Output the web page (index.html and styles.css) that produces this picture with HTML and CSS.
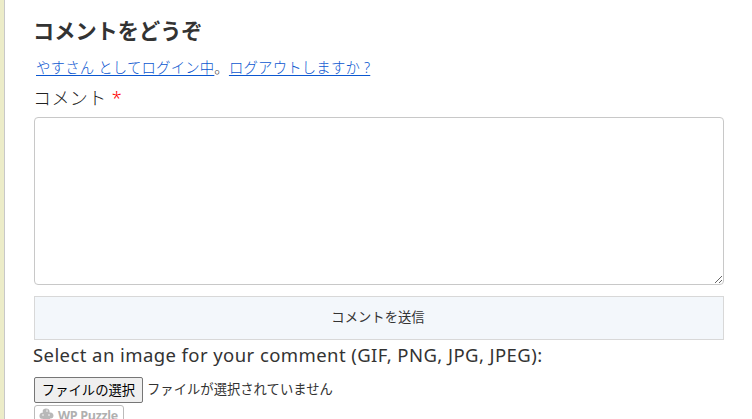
FILE: index.html
```
<!DOCTYPE html>
<html lang="ja">
<head>
    <meta charset="UTF-8">
    <meta name="viewport" content="width=device-width, initial-scale=1.0">
    <title>コメントをどうぞ</title>
    <link rel="stylesheet" href="styles.css">
</head>
<body>

    <div class="content">
        <h3 class="reply-title">コメントをどうぞ</h3>

        <form class="comment-form">
            <p class="logged-in-as"><a href="#">やすさん としてログイン中</a>。<a href="#">ログアウトしますか ?</a></p>

            <label class="comment-label" for="comment">コメント <span class="required">*</span></label>
            <textarea id="comment" class="comment-box"></textarea>

            <button type="button" class="submit">コメントを送信</button>

            <p class="image-label">Select an image for your comment (GIF, PNG, JPG, JPEG):</p>
            <div class="file-row">
                <button type="button" class="file-button">ファイルの選択</button>
                <span class="file-name">ファイルが選択されていません</span>
            </div>
        </form>

        <a class="wp-puzzle" href="#">
            <svg width="15" height="15" viewBox="0 0 15 15">
                <path fill="#b8b8b8" d="M4 4.500C3 2 4.500 0.500 7 0.500S11 2 10.500 4.500C13 4 14.500 5.500 14.500 7.500S13 11 11 10.500V13H8.500C8.500 11 6 11 6 13H3.500V10.500C1.500 11.500 0.300 9.500 0.500 7.500S2 4.500 4 4.500Z"/>
                <path fill="#d6d6d6" d="M7 1.500H9V4H7ZM3 6H5V8H3ZM9 6H11V8H9Z"/>
            </svg>
            <span>WP Puzzle</span>
        </a>
    </div>

</body>
</html>
```

FILE: styles.css
```
body {
    margin: 0;
    height: 419px;
    overflow: hidden;
    background-color: #ececc8;
    color: #333;
    font-family: "Noto Sans", "Noto Sans CJK JP", sans-serif;
    font-size: 18px;
}

.content {
    box-sizing: border-box;
    height: 419px;
    margin-left: 4px;
    padding: 15px 28px 0 29px;
    overflow: hidden;
    border-left: 1px solid #c8c8c8;
    background-color: #fff;
}

.reply-title {
    margin: 0 0 0 -1px;
    font-size: 21.2px;
    line-height: 32px;
}

.comment-form {
    display: flex;
    flex-direction: column;
}

.logged-in-as {
    margin: 9px 0 0 2px;
    font-size: 14.4px;
    font-weight: 300;
    line-height: 24px;
    letter-spacing: 0.18px;
}

.logged-in-as a {
    color: #0b57d0;
    text-underline-offset: 2px;
    text-decoration-skip-ink: none;
}

.comment-label {
    margin: 3px 0 0 -1px;
    color: #222;
    font-weight: 300;
    line-height: 30px;
    letter-spacing: 0.4px;
}

.required {
    color: #f00;
}

.comment-box {
    box-sizing: border-box;
    width: 690px;
    height: 168px;
    margin: 4px 0 0;
    border: 1px solid #c8c8c8;
    border-radius: 4px;
    resize: both;
}

.submit {
    width: 690px;
    height: 44px;
    margin-top: 11px;
    padding: 0 2px 3px 0;
    border: 1px solid #d8d8d8;
    background-color: #f3f7fb;
    color: #333;
    font-family: inherit;
    font-size: 13.333px;
}

.image-label {
    margin: 0 0 1px -1px;
    font-size: 18.5px;
    line-height: 29px;
    letter-spacing: 0.42px;
    white-space: nowrap;
}

.file-row {
    display: flex;
    align-items: center;
    gap: 4px;
    margin-top: 7px;
    font-size: 13.333px;
    line-height: 20px;
}

.file-button {
    width: 109px;
    height: 26px;
    padding: 0 0 2px;
    border: 1px solid #767676;
    border-radius: 2px;
    background-color: #efefef;
    color: #000;
    font-family: inherit;
    font-size: 13.333px;
}

.file-name {
    padding-bottom: 2px;
}

.wp-puzzle {
    display: flex;
    box-sizing: border-box;
    width: 90px;
    height: 22px;
    margin-top: 2px;
    padding: 2px 4px;
    gap: 4px;
    border: 1px solid #bbb;
    border-radius: 3px;
    color: #b0b0b0;
    font-family: "Open Sans", sans-serif;
    font-size: 12.5px;
    font-weight: bold;
    line-height: 15px;
    letter-spacing: -0.3px;
    text-decoration: none;
    white-space: nowrap;
}
```
